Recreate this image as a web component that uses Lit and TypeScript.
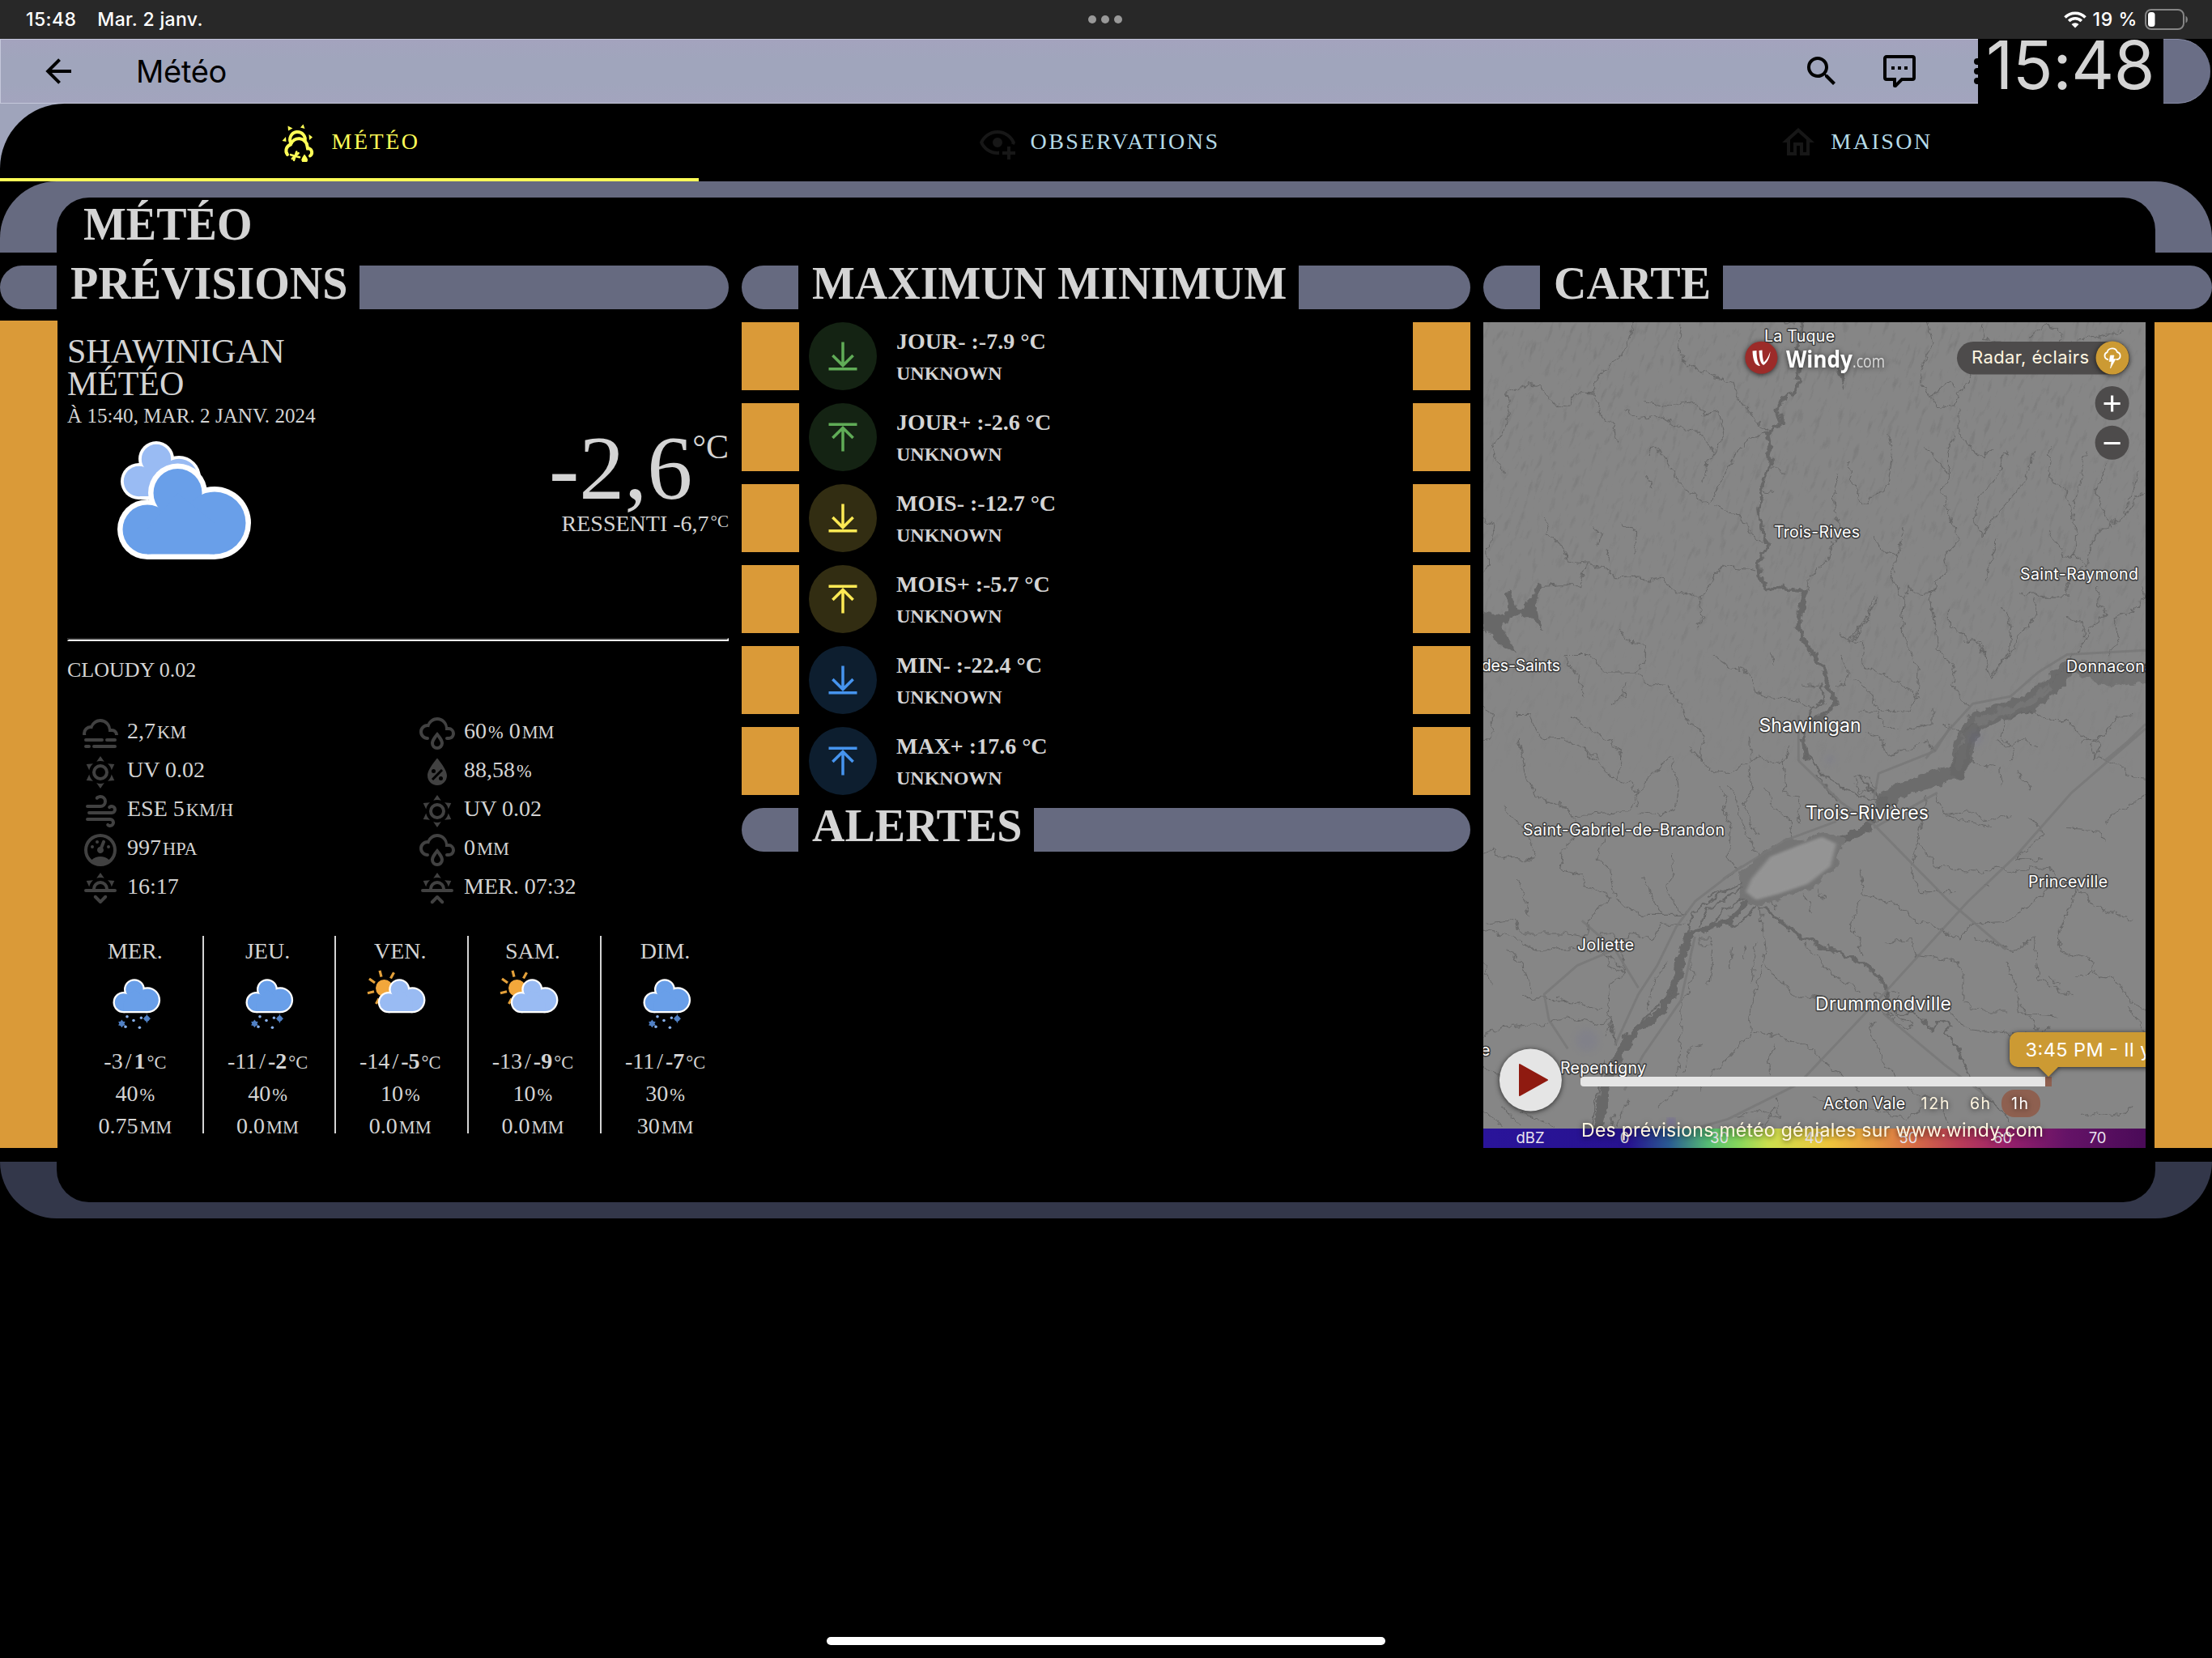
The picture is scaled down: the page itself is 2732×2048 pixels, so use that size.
import { LitElement, html, css, svg, nothing } from "lit";
import { customElement, property } from "lit/decorators.js";

const SUN_RAYS_TOP =
  "M12,2L14.39,5.42C13.65,5.15 12.84,5 12,5C11.16,5 10.35,5.15 9.61,5.42L12,2M3.34,7L7.5,6.65C6.9,7.16 6.36,7.78 5.94,8.5C5.5,9.24 5.25,10 5.11,10.79L3.34,7M20.65,7L18.88,10.79C18.74,10 18.47,9.23 18.05,8.5C17.63,7.78 17.1,7.15 16.5,6.64L20.65,7";
const HORIZON =
  "M3,12H7A5,5 0 0,1 12,7A5,5 0 0,1 17,12H21A1,1 0 0,1 22,13A1,1 0 0,1 21,14H3A1,1 0 0,1 2,13A1,1 0 0,1 3,12M15,12A3,3 0 0,0 12,9A3,3 0 0,0 9,12H15";

const ICONS: Record<string, string> = {
  back: "M20,11V13H8L13.5,18.5L12.08,19.92L4.16,12L12.08,4.08L13.5,5.5L8,11H20Z",
  search:
    "M9.5,3A6.5,6.5 0 0,1 16,9.5C16,11.11 15.41,12.59 14.44,13.73L14.71,14H15.5L20.5,19L19,20.5L14,15.5V14.71L13.73,14.44C12.59,15.41 11.11,16 9.5,16A6.5,6.5 0 0,1 3,9.5A6.5,6.5 0 0,1 9.5,3M9.5,5C7,5 5,7 5,9.5C5,12 7,14 9.5,14C12,14 14,12 14,9.5C14,7 12,5 9.5,5Z",
  comment:
    "M9,22A1,1 0 0,1 8,21V18H4A2,2 0 0,1 2,16V4C2,2.89 2.9,2 4,2H20A2,2 0 0,1 22,4V16A2,2 0 0,1 20,18H13.9L10.2,21.71C10,21.9 9.75,22 9.5,22V22H9M10,16V19.08L13.08,16H20V4H4V16H10M17,11H15V9H17V11M13,11H11V9H13V11M9,11H7V9H9V11Z",
  dots: "M12,16A2,2 0 0,1 14,18A2,2 0 0,1 12,20A2,2 0 0,1 10,18A2,2 0 0,1 12,16M12,10A2,2 0 0,1 14,12A2,2 0 0,1 12,14A2,2 0 0,1 10,12A2,2 0 0,1 12,10M12,4A2,2 0 0,1 14,6A2,2 0 0,1 12,8A2,2 0 0,1 10,6A2,2 0 0,1 12,4Z",
  eye: "M12,4.5C7,4.5 2.73,7.61 1,12C2.73,16.39 7,19.5 12,19.5C12.36,19.5 12.72,19.5 13.08,19.45C13.03,19.13 13,18.82 13,18.5C13,18.14 13.04,17.78 13.1,17.42C12.74,17.46 12.37,17.5 12,17.5C8.24,17.5 4.83,15.36 3.18,12C4.83,8.64 8.24,6.5 12,6.5C15.76,6.5 19.17,8.64 20.82,12C20.7,12.24 20.56,12.45 20.43,12.68C21.09,12.84 21.72,13.11 22.29,13.5C22.56,13 22.8,12.5 23,12C21.27,7.61 17,4.5 12,4.5M12,9A3,3 0 0,0 9,12A3,3 0 0,0 12,15A3,3 0 0,0 15,12A3,3 0 0,0 12,9M18,14.5V17.5H15V19.5H18V22.5H20V19.5H23V17.5H20V14.5H18Z",
  home: "M12,5.69L17,10.19V18H15V12H9V18H7V10.19L12,5.69M12,3L2,12H5V20H11V14H13V20H19V12H22L12,3Z",
  fog: "M3,15H13A1,1 0 0,1 14,16A1,1 0 0,1 13,17H3A1,1 0 0,1 2,16A1,1 0 0,1 3,15M16,15H21A1,1 0 0,1 22,16A1,1 0 0,1 21,17H16A1,1 0 0,1 15,16A1,1 0 0,1 16,15M1,12A5,5 0 0,1 6,7C7,4.65 9.3,3 12,3C15.43,3 18.24,5.66 18.5,9.03L19,9C21.19,9 22.97,10.76 23,13H21A2,2 0 0,0 19,11H17V10A5,5 0 0,0 12,5C9.5,5 7.45,6.82 7.06,9.19C6.73,9.07 6.37,9 6,9A3,3 0 0,0 3,12C3,12.35 3.06,12.69 3.17,13H1.1L1,12M3,19H5A1,1 0 0,1 6,20A1,1 0 0,1 5,21H3A1,1 0 0,1 2,20A1,1 0 0,1 3,19M8,19H21A1,1 0 0,1 22,20A1,1 0 0,1 21,21H8A1,1 0 0,1 7,20A1,1 0 0,1 8,19Z",
  sunny:
    "M12,7A5,5 0 0,1 17,12A5,5 0 0,1 12,17A5,5 0 0,1 7,12A5,5 0 0,1 12,7M12,9A3,3 0 0,0 9,12A3,3 0 0,0 12,15A3,3 0 0,0 15,12A3,3 0 0,0 12,9M3.36,17L5.12,13.23C5.26,14 5.53,14.78 5.95,15.5C6.37,16.24 6.91,16.86 7.5,17.37L3.36,17M20.64,17L16.5,17.36C17.09,16.85 17.62,16.22 18.04,15.5C18.46,14.77 18.73,14 18.87,13.21L20.64,17M12,22L9.59,18.56C10.33,18.83 11.14,19 12,19C12.82,19 13.63,18.83 14.37,18.56L12,22Z" +
    SUN_RAYS_TOP,
  windy:
    "M4,10A1,1 0 0,1 3,9A1,1 0 0,1 4,8H12A2,2 0 0,0 14,6A2,2 0 0,0 12,4C11.45,4 10.95,4.22 10.59,4.59C10.2,5 9.56,5 9.17,4.59C8.78,4.2 8.78,3.56 9.17,3.17C9.9,2.45 10.9,2 12,2A4,4 0 0,1 16,6A4,4 0 0,1 12,10H4M19,12A1,1 0 0,0 20,11A1,1 0 0,0 19,10C18.72,10 18.47,10.11 18.29,10.29C17.9,10.68 17.27,10.68 16.88,10.29C16.5,9.9 16.5,9.27 16.88,8.88C17.42,8.34 18.17,8 19,8A3,3 0 0,1 22,11A3,3 0 0,1 19,14H5A1,1 0 0,1 4,13A1,1 0 0,1 5,12H19M18,18H4A1,1 0 0,1 3,17A1,1 0 0,1 4,16H18A3,3 0 0,1 21,19A3,3 0 0,1 18,22C17.17,22 16.42,21.66 15.88,21.12C15.5,20.73 15.5,20.1 15.88,19.71C16.27,19.32 16.9,19.32 17.29,19.71C17.47,19.89 17.72,20 18,20A1,1 0 0,0 19,19A1,1 0 0,0 18,18Z",
  gauge:
    "M12,2A10,10 0 0,0 2,12A10,10 0 0,0 12,22A10,10 0 0,0 22,12A10,10 0 0,0 12,2M12,4A8,8 0 0,1 20,12C20,14.4 19,16.5 17.3,18C15.9,16.7 14,16 12,16C10,16 8.2,16.7 6.7,18C5,16.5 4,14.4 4,12A8,8 0 0,1 12,4M14,5.89C13.62,5.9 13.26,6.15 13.1,6.54L11.81,9.77L11.71,10C11,10.13 10.41,10.6 10.14,11.26C9.73,12.29 10.23,13.45 11.26,13.86C12.29,14.27 13.45,13.77 13.86,12.74C14.12,12.08 14,11.32 13.57,10.76L13.67,10.5L14.96,7.29L14.97,7.26C15.17,6.75 14.92,6.17 14.41,5.96C14.28,5.91 14.15,5.89 14,5.89M10,6A1,1 0 0,0 9,7A1,1 0 0,0 10,8A1,1 0 0,0 11,7A1,1 0 0,0 10,6M7,9A1,1 0 0,0 6,10A1,1 0 0,0 7,11A1,1 0 0,0 8,10A1,1 0 0,0 7,9M17,9A1,1 0 0,0 16,10A1,1 0 0,0 17,11A1,1 0 0,0 18,10A1,1 0 0,0 17,9Z",
  sunset:
    HORIZON + SUN_RAYS_TOP +
    "M12.71,20.71L15.82,17.6C16.21,17.21 16.21,16.57 15.82,16.18C15.43,15.79 14.8,15.79 14.41,16.18L12,18.59L9.59,16.18C9.2,15.79 8.57,15.79 8.18,16.18C7.79,16.57 7.79,17.21 8.18,17.6L11.29,20.71C11.5,20.9 11.74,21 12,21C12.26,21 12.5,20.9 12.71,20.71Z",
  sunrise:
    HORIZON + SUN_RAYS_TOP +
    "M12.71,16.3L15.82,19.41C16.21,19.8 16.21,20.43 15.82,20.82C15.43,21.21 14.8,21.21 14.41,20.82L12,18.41L9.59,20.82C9.2,21.21 8.57,21.21 8.18,20.82C7.79,20.43 7.79,19.8 8.18,19.41L11.29,16.3C11.5,16.1 11.74,16 12,16C12.26,16 12.5,16.1 12.71,16.3Z",
  rainy:
    "M6,14.03A1,1 0 0,1 7,15.03C7,15.58 6.55,16.03 6,16.03C3.24,16.03 1,13.79 1,11.03C1,8.27 3.24,6.03 6,6.03C7,3.68 9.3,2.03 12,2.03C15.43,2.03 18.24,4.69 18.5,8.06L19,8.03A4,4 0 0,1 23,12.03C23,14.23 21.21,16.03 19,16.03H18C17.45,16.03 17,15.58 17,15.03C17,14.47 17.45,14.03 18,14.03H19A2,2 0 0,0 21,12.03A2,2 0 0,0 19,10.03H17V9.03C17,6.27 14.76,4.03 12,4.03C9.5,4.03 7.45,5.84 7.06,8.21C6.73,8.09 6.37,8.03 6,8.03A3,3 0 0,0 3,11.03A3,3 0 0,0 6,14.03M12,14.15C12.18,14.39 12.37,14.66 12.56,14.94C13,15.56 14,17.03 14,18C14,19.11 13.1,20 12,20A2,2 0 0,1 10,18C10,17.03 11,15.56 11.44,14.94C11.63,14.66 11.82,14.4 12,14.15M12,11.03L11.5,11.59C11.5,11.59 10.65,12.55 9.79,13.81C8.93,15.06 8,16.56 8,18A4,4 0 0,0 12,22A4,4 0 0,0 16,18C16,16.56 15.07,15.06 14.21,13.81C13.35,12.55 12.5,11.59 12.5,11.59Z",
  humidity:
    "M12,3.25C12,3.25 6,10 6,14C6,17.32 8.69,20 12,20A6,6 0 0,0 18,14C18,10 12,3.25 12,3.25M14.47,9.97L15.53,11.03L9.53,17.03L8.47,15.97M9.75,10A1.25,1.25 0 0,1 11,11.25A1.25,1.25 0 0,1 9.75,12.5A1.25,1.25 0 0,1 8.5,11.25A1.25,1.25 0 0,1 9.75,10M14.25,14.5A1.25,1.25 0 0,1 15.5,15.75A1.25,1.25 0 0,1 14.25,17A1.25,1.25 0 0,1 13,15.75A1.25,1.25 0 0,1 14.25,14.5Z",
  down: "M19.92,12.08L12,20L4.08,12.08L5.5,10.67L11,16.17V2H13V16.17L18.5,10.66L19.92,12.08M12,20H2V22H22V20H12Z",
  up: "M4.08,11.92L12,4L19.92,11.92L18.5,13.33L13,7.83V22H11V7.83L5.5,13.33L4.08,11.92M12,4H22V2H2V4H12Z",
};

const icon = (name: string, size = 48) => html`<svg class="icon" width=${size} height=${size} viewBox="0 0 24 24">
  <path fill="currentColor" fill-rule=${name === "humidity" ? "evenodd" : "nonzero"} d=${ICONS[name]}></path>
</svg>`;

/* Cloud outlined in white: three lobes over a flat base. */
const cloud = (fill: string) => svg`
  <g fill="#fff">
    <circle cx="181" cy="655" r="37"/><circle cx="218.5" cy="610" r="36.5"/><circle cx="264" cy="647" r="45"/>
    <path d="M181 655L218 610L264 647V692H181Z"/>
  </g>
  <g fill=${fill}>
    <circle cx="181" cy="655" r="30.5"/><circle cx="218.5" cy="610" r="30"/><circle cx="264" cy="647" r="38.5"/>
    <path d="M181 655L218 610L264 647V685.5H181Z"/>
  </g>`;

const currentIcon = html`<svg class="now-icon" width="175" height="160" viewBox="140 540 175 160">
  <g fill="#fff">
    <circle cx="170.5" cy="595.5" r="22.5"/><circle cx="192" cy="568" r="22"/><circle cx="220" cy="591" r="27"/>
    <path d="M170 596L192 568L220 591V618H170Z"/>
  </g>
  <g fill="#99bbf3">
    <circle cx="170.5" cy="595.5" r="18.7"/><circle cx="192" cy="568" r="18.2"/><circle cx="220" cy="591" r="23.2"/>
    <path d="M170 596L192 568L220 591V614H170Z"/>
  </g>
  ${cloud("#699fe9")}
</svg>`;

const snowIcon = html`<svg class="day-icon" width="112" height="92" viewBox="0 3 112 92">
  <g transform="translate(-22.6 -184.4) scale(.355)">${cloud("#699fe9")}</g>
  <g fill="#4f7fc4">
    <path d="M39.4 69.500l1.700 2.200 2.600 .3-1.200 2.300 1.200 2.300-2.600 .4-1.700 2.200-1.700-2.200-2.600-.4 1.200-2.300-1.200-2.300 2.600-.3z"/>
    <path d="M70.400 62.500l1.500 3.600 3.300 2.200-3.300 2-1.500 3.700-1.500-3.700-3.300-2 3.300-2.200z"/>
    <circle cx="70.400" cy="68.300" r="3.300"/>
  </g>
  <g fill="#86aee8">
    <circle cx="46" cy="65.700" r="1.800"/><circle cx="54" cy="70.500" r="1.800"/><circle cx="44" cy="78.200" r="1.800"/>
    <circle cx="63.400" cy="67.300" r="1.700"/><circle cx="61.400" cy="79.300" r="1.800"/>
  </g>
</svg>`;

const sunCloudIcon = html`<svg class="day-icon" width="112" height="92" viewBox="0 3 112 92">
  <g stroke="#e3a03a" stroke-width="3.200" stroke-linecap="butt">
    <path d="M31 8.800L33 16.700M48.500 11.200L44.500 18.500M18 19L25 24M16 36.800L24 34.800M26.500 50L30 43.500"/>
  </g>
  <circle cx="36.500" cy="30.500" r="10.500" fill="#f2a73b"/>
  <g transform="translate(-22.300 -184.400) scale(.355)">${cloud("#99bbf3")}</g>
</svg>`;

const tabWeatherIcon = html`<svg class="icon" width="48" height="48" viewBox="346 152 48 48">
  <g fill="currentColor">
    <path d="M355.500 155.500L361.500 158.500L356 161.500ZM374.500 153.500L376.500 159L371 157.500ZM381.500 166L386 169.500L382 173ZM353 169L353.500 175L348.500 174Z"/>
    <path d="M376 190.500Q380 195.500 380 197.300A3.800 3.800 0 0 1 372.400 197.300Q372.400 195.500 376 190.500Z"/>
  </g>
  <g fill="none" stroke="currentColor" stroke-width="4" stroke-linecap="round">
    <path d="M359.500 177A9.300 9.300 0 1 1 376.500 174.500"/>
    <path d="M355 191A8 8 0 0 1 359 178.500A10.500 10.500 0 0 1 379.500 181L380 183.500H382A5.200 5.200 0 0 1 383 192.500"/>
    <path stroke-width="2.600" d="M359 191.200L370 194.200M363 197.800L366.200 187.600M360.800 196L368.600 189.200"/>
  </g>
</svg>`;

@customElement("section-bar")
class SectionBar extends LitElement {
  @property() label = "";
  static styles = css`
    :host { display: flex; height: 54px; }
    .cap { width: 70px; background: #666a80; border-radius: 27px 0 0 27px; }
    .rest { flex: 1; background: #666a80; border-radius: 0 27px 27px 0; }
    .title { padding: 1px 15px 0 17px; font: bold 56px/42px "Liberation Serif", serif; color: #d4d4d4; white-space: nowrap; }
  `;
  render() {
    return html`<div class="cap"></div><div class="title">${this.label}</div><div class="rest"></div>`;
  }
}

interface Place { name: string; x: number; y: number; w?: number; size: number; }

const PLACES: Place[] = [
  { name: "La Tuque", x: 2179, y: 422, w: 87, size: 19.500 },
  { name: "Trois-Rives", x: 2191, y: 664, w: 106, size: 19.500 },
  { name: "Saint-Raymond", x: 2495, y: 716, w: 146, size: 19.500 },
  { name: "-des-Saints", x: 1821, y: 828.500, w: 106, size: 19.500 },
  { name: "Donnacona", x: 2552, y: 830, w: 108, size: 19.500 },
  { name: "Shawinigan", x: 2172.500, y: 903.500, w: 126, size: 23 },
  { name: "Trois-Rivières", x: 2230, y: 1012, w: 152, size: 23 },
  { name: "Saint-Gabriel-de-Brandon", x: 1881, y: 1032, w: 249, size: 19.500 },
  { name: "Princeville", x: 2505, y: 1096, w: 98, size: 19.500 },
  { name: "Joliette", x: 1948, y: 1174, w: 70, size: 19.500 },
  { name: "Drummondville", x: 2242, y: 1248, w: 168, size: 23 },
  { name: "Repentigny", x: 1927, y: 1326, w: 106, size: 19.500 },
  { name: "e", x: 1829, y: 1304, size: 19.500 },
  { name: "Acton Vale", x: 2252, y: 1370, w: 101, size: 19.500 },
];

const LEGEND: [string, number][] = [
  ["dBZ", 1890], ["0", 2006.700], ["30", 2123.600], ["40", 2240.500], ["50", 2357], ["60", 2473.700], ["70", 2590.600],
];

/* Upper and lower halves of the basemap are drawn in their own tile coordinates. */
const STREAMS_TOP = `
M340 50L325 120L300 190L265 230L258 290L270 370L295 400L308 470
M258 300L215 295L200 345L170 335L140 270L115 265L70 300L78 370L60 440L40 480L50 530L65 575
M442 60L436 110L440 175L480 220L550 260L560 310L590 370L625 430
M360 320L400 345L460 325L490 370L520 360L530 450L515 495L495 540L490 600
M322 355L350 385L400 378L430 410L480 430L505 490L512 500
M625 435L590 445L560 500L530 580L515 640L500 680L460 640L430 590L400 500L380 478L375 510
M515 685L550 710L580 750L595 790L615 820
M150 720L160 780L185 820L200 880L240 885L280 900L300 935L350 930L370 950L400 930L420 980L460 990L480 1010L500 960L530 890L560 900L600 910
M480 1010L485 1070L475 1110 M240 890L225 960L180 960L145 965
M365 580L380 625 M255 755L270 790L265 825 M310 745L345 775L340 850 M280 840L292 880
M965 50L975 120L955 200L945 250L970 300L990 290L1000 260L1030 270
M970 300L985 340L1020 345L1030 300L1060 230 M1080 60L1085 110L1120 120L1165 170
M1030 345L1030 430L1060 490L1080 520L1100 490 M1180 100L1220 60L1250 90L1240 130L1300 110L1380 80
M955 480L985 530L1010 580L995 640L1010 700L1020 770L1030 810L1000 860L1005 910L980 960L970 1010L980 1100L985 1180L1020 1240L1015 1300L1050 1380
M775 575L765 640L770 720L775 780L755 860L715 930L705 975
M795 530L800 590L815 630L825 680L850 650L880 610L890 500L880 440
M915 755L900 860L888 930L900 980L915 1015L910 1120L930 1200L945 1240L940 1350L920 1400L860 1390L840 1330L810 1285
M850 790L865 835L900 860 M860 1005L830 1080L800 1150L770 1130 M850 1000L835 1080L800 1160
M800 1155L830 1160L825 1230L860 1265L900 1290L945 1350
M1020 430L1010 500L1010 580 M1130 500L1110 590L1080 640L1060 720L1080 790L1120 700L1170 600L1190 500
M1225 480L1220 580L1255 630L1270 700L1280 760L1275 850L1300 900L1310 820L1340 760L1380 720L1420 640
M1300 490L1290 590L1275 690 M1345 540L1320 640L1355 760 M1410 560L1400 640L1380 710
M1220 770L1245 820L1255 870L1280 850 M1110 800L1100 870L1088 940
M915 1015L925 960L935 985L970 990L980 970 M1155 995L1190 985L1210 1000L1260 1000L1265 940L1300 890
M1190 1000L1200 1060L1170 1110L1150 1170L1100 1280L1080 1180L1030 1120L1010 1100L1010 1040
M1330 960L1320 1010L1345 1060L1310 1110L1300 1160L1255 1240L1210 1330 M1420 960L1425 1000L1400 1050L1360 1070L1370 1130L1350 1210
M1260 1070L1290 1090L1300 1140 M1125 1040L1145 1100L1140 1180L1120 1230L1100 1270 M1040 1150L1080 1165L1095 1260
M1000 1440L1040 1475 M975 1380L975 1440L920 1460 M20 1380L40 1410L40 1470L20 1500 M90 1410L120 1410L145 1495L190 1490L230 1520L270 1568
M210 1410L250 1460L290 1500L320 1568 M310 1115L330 1160L365 1165L365 1230L345 1260L275 1260L245 1200L190 1200
M345 1260L365 1300L410 1310L440 1370L455 1430L490 1470L480 1568 M190 1200L220 1280L235 1345 M290 1370L320 1340L325 1290
M505 1200L545 1245L570 1250L590 1290L600 1330L640 1350L690 1360L715 1390 M695 1300L760 1310 M630 1190L640 1235
M585 1480L590 1568 M830 1470L860 1480L880 1550L920 1530L960 1495L980 1530 M820 1395L860 1405L870 1445L900 1460
M1190 1395L1230 1430L1260 1430L1290 1480L1330 1510L1315 1568 M1185 1395L1130 1420L1120 1490L1150 1530L1140 1568 M1400 1410L1370 1415L1330 1490L1290 1500
M780 1200L795 1250L790 1300L770 1310 M680 50L640 50 M630 550L660 570 M610 635L640 640 M20 735L45 745L40 800L30 830L32 890L20 920`;

const STREAMS_BOTTOM = `
M95 30L110 150L140 220L190 240L210 270L330 262L350 190L400 110L420 90
M300 50L320 100L300 160L340 170L350 240 M230 60L300 160 M460 60L500 130L540 140L600 90L660 110L670 50
M420 100L435 200L430 250L400 270L350 265 M540 180L560 230L580 330L605 400 M580 120L590 190L575 240L600 330 M620 190L640 250L670 280L680 360
M520 180L540 210L530 250L545 310L540 400L560 440L540 470 M655 90L660 200L690 210L690 300
M65 245L100 300L130 380L125 415L50 400L40 370L20 390 M210 270L225 320L190 380L185 440L230 460L240 490L290 530L265 560L245 600L240 650L190 640L100 640L90 600L25 610
M420 390L425 440L410 490L430 560L450 580L350 580L300 530L290 440L260 400L290 310 M360 465L380 530L400 575
M95 470L120 590 M20 630L80 650L130 690L200 690L280 700L300 730L320 760L290 800L285 860L290 920L280 960
M280 690L340 640L380 660L400 610L450 610 M75 690L110 750L125 820 M20 730L35 800 M100 840L190 845L270 880
M460 690L465 790L440 860L440 950L435 1070L430 1130L390 1180 M510 690L500 800 M550 680L545 750 M575 680L570 720 M600 670L590 790 M610 560L620 700L590 860L585 960L530 1040L480 1130
M410 730L380 800L370 880 M490 985L460 1000L450 1070 M610 500L640 560 M700 520L720 570 M730 500L745 535
M820 530L800 620L820 660L825 710 M820 440L830 520L900 550L940 600L980 620L1030 660L1060 605L1140 600L1170 560L1190 540L1240 480L1280 500L1330 560L1400 600
M1110 120L1060 110L1050 90 M1115 120L1120 185 M1150 130L1185 190 M980 200L1000 270L1100 310 M960 210L950 300L930 440L945 510L1020 510 M1000 270L1060 260L1090 290L1140 270
M945 360L980 430L1080 450L1110 430L1150 450L1190 430L1240 450 M1150 405L1210 410 M1280 500L1260 580L1240 640L1250 700L1310 720L1320 770L1360 780L1400 860L1427 880
M1100 500L1090 480 M880 670L930 655L940 710L1030 730L1040 760L1040 860L1080 880L1130 880 M1130 730L1150 800L1160 890L1240 898
M1060 650L1150 695L1190 650L1200 780L1250 820L1275 840 M1220 770L1240 800 M1320 770L1280 770 M1200 60L1160 30L1130 60L1110 40
M1320 90L1310 50L1350 0 M1320 90L1370 110L1390 150L1427 155 M1260 310L1330 320L1340 350 M1150 410L1180 370L1210 330L1180 280 M1427 210L1380 250L1340 290
M620 740L650 790L690 840L740 840 M700 670L760 770L820 820 M840 940L880 1060L930 1130L990 1170L1010 1240 M850 910L840 940
M590 945L650 960L680 980L710 990L750 1050L820 1130 M640 990L625 1040L630 1080 M20 960L60 930L140 925L200 905L270 925L290 900
M1010 880L1050 940L1200 960L1230 930 M1160 860L1200 940 M1390 870L1427 950 M720 1150L780 1180L850 1190L920 1220L950 1190
M1290 1210L1320 1200L1370 1210L1400 1180 M20 1190L60 1240 M60 1180L100 1240 M300 1200L290 1245 M560 1210L600 1190L650 1220L640 1150
M100 1200L170 1240 M20 1060L60 1090 M330 1160L300 1245 M610 1245L640 1190`;

@customElement("radar-map")
class RadarMap extends LitElement {
  static styles = css`
    :host { display: block; width: 818px; height: 1020px; overflow: hidden; }
    .map { display: block; font-family: Inter, "Noto Sans", sans-serif; }
    .thin { fill: none; stroke: #5e5e5e; stroke-width: 1.1; opacity: .75; vector-effect: non-scaling-stroke; stroke-linejoin: round; }
    .road { fill: none; stroke: #787878; stroke-width: 3; vector-effect: non-scaling-stroke; stroke-linejoin: round; }
    .river { fill: none; stroke: #676767; vector-effect: non-scaling-stroke; stroke-linejoin: round; stroke-linecap: round; }
    .r3 { stroke-width: 2.2; } .r5 { stroke-width: 4; } .r7 { stroke-width: 6; } .r9 { stroke-width: 10; } .r18 { stroke-width: 19; } .r20 { stroke-width: 21; }
    .bay { fill: #686868; }
    .lake { fill: #747474; }
    .core { fill: none; stroke: #7c7c7c; stroke-width: 8; vector-effect: non-scaling-stroke; stroke-linejoin: round; }
    .place { fill: #fff; stroke: #303030; stroke-width: 3; paint-order: stroke; stroke-linejoin: round; stroke-opacity: .85; }
    .chrome { fill: #fff6e0; }
    .shadow { filter: drop-shadow(0 1px 3px rgba(0, 0, 0, .7)); }
  `;
  render() {
    return html`<svg class="map" width="818" height="1020" viewBox="1832 398 818 1020">
      <defs>
        <filter id="rough" x="0" y="0" width="1" height="1" filterUnits="objectBoundingBox">
          <feTurbulence type="fractalNoise" baseFrequency=".09" numOctaves="3" seed="4" result="n"></feTurbulence>
          <feDisplacementMap in="SourceGraphic" in2="n" scale="12" xChannelSelector="R" yChannelSelector="G"></feDisplacementMap>
        </filter>
        <filter id="relief" x="0" y="0" width="1" height="1" color-interpolation-filters="sRGB">
          <feTurbulence type="fractalNoise" baseFrequency=".16 .05" numOctaves="3" seed="9"></feTurbulence>
          <feColorMatrix values="0 0 0 0 .4  0 0 0 0 .4  0 0 0 0 .4  4 0 0 0 -2.3"></feColorMatrix>
        </filter>
        <filter id="soft"><feGaussianBlur stdDeviation="4"></feGaussianBlur></filter>
        <linearGradient id="dbz">
          <stop offset="0" stop-color="#2a149a"></stop><stop offset=".22" stop-color="#27128f"></stop>
          <stop offset=".28" stop-color="#2a5a92"></stop><stop offset=".34" stop-color="#56bd74"></stop>
          <stop offset=".385" stop-color="#86d75c"></stop><stop offset=".43" stop-color="#cbdf4e"></stop>
          <stop offset=".52" stop-color="#efc63d"></stop><stop offset=".59" stop-color="#e79b40"></stop>
          <stop offset=".65" stop-color="#d66c46"></stop><stop offset=".72" stop-color="#b93c58"></stop>
          <stop offset=".79" stop-color="#97206b"></stop><stop offset=".88" stop-color="#651367"></stop>
          <stop offset="1" stop-color="#4a0a58"></stop>
        </linearGradient>
        <linearGradient id="fade" x1="0" y1="0" x2="0" y2="1">
          <stop offset="0" stop-color="#fff"></stop><stop offset=".5" stop-color="#bbb"></stop><stop offset=".8" stop-color="#000"></stop>
        </linearGradient>
        <mask id="north"><rect x="1832" y="398" width="818" height="700" fill="url(#fade)"></rect></mask>
      </defs>
      <rect x="1832" y="398" width="818" height="1020" fill="#868686"></rect>
      <g mask="url(#north)">
        <g transform="rotate(18 2240 700)" opacity=".3"><rect x="1650" y="250" width="1200" height="1000" filter="url(#relief)"></rect></g>
      </g>
      <g filter="url(#rough)">
        <rect x="1812" y="378" width="858" height="1060" fill="none"></rect>
        <g transform="translate(1820 380) scale(.5816 .3571)">
          <path class="thin" d=${STREAMS_TOP}></path>
          <path class="river r5" d="M700 50L688 110L692 200L686 290L662 300L645 350L655 400L622 435L632 500L626 560L612 620L604 700L612 760L624 830L605 880L608 930L622 970L655 968L705 980"></path>
          <path class="river r7" d="M705 980L695 1040L690 1110L712 1180L740 1240L752 1300L768 1360L755 1400L735 1420L712 1440"></path>
          <path class="river r5" d="M712 1440L700 1480L710 1568"></path>
          <path class="river r3" d="M740 1300L745 1360L715 1390L712 1430"></path>
          <path class="bay" d="M20 1050L60 1070L75 1040L65 990L80 975L88 1040L110 1045L115 1010L140 945L150 965L130 1010L138 1070L152 1118L125 1080L100 1060L70 1080L60 1110L95 1200L60 1170L20 1110ZM770 200L790 230L785 280Z"></path>
          <path class="bay" opacity=".65" d="M1265 1225L1290 1280L1350 1312L1410 1300L1440 1280V1225L1380 1240L1320 1240L1290 1220Z"></path>
          <path class="river r20" opacity=".8" d="M1260 1250L1225 1310L1180 1370L1120 1400L1070 1430L1040 1500L1030 1600"></path>
          <path class="core" opacity=".5" d="M1225 1310L1180 1370L1120 1400L1070 1430L1040 1500L1030 1600"></path>
        </g>
        <g transform="translate(1820 900) scale(.5816 .3954)">
          <path class="thin" d=${STREAMS_BOTTOM}></path>
          <path class="river r18" opacity=".8" d="M1060 10L1050 60L1030 130L980 155L910 190L865 230"></path>
          <path class="river r9" d="M870 225L835 310L780 350"></path>
          <path class="river r3" d="M700 0L702 70L740 140L790 190L820 210L860 230M730 150L770 220M820 150L860 220M610 555L650 600L700 660"></path>
          <path class="lake" d="M570 445L620 380L660 350L700 345L740 320L790 345L775 390L775 430L740 470L720 500L680 520L610 550L575 540L565 490Z"></path>
          <path class="river r5" d="M620 565L700 655L760 690L840 745L875 800L880 850"></path>
          <path class="river r3" d="M880 850L900 890L940 890L975 950L990 910L1015 930L1000 950L1030 1000L1050 1080L1080 1140L1140 1220"></path>
          <path class="river r7" d="M580 545L540 600L480 635L460 640"></path>
          <path class="river r3" d="M570 480L520 520L470 570L450 640M570 500L500 560L480 620M575 530L530 570L500 630M600 550L560 620L530 600M540 500L500 520"></path>
          <path class="river r9" d="M460 640L440 720L425 820L395 890L340 950L300 1040L280 1100L265 1260"></path>
          <path class="river r3" d="M425 820L380 880L320 970M300 990L290 930M275 1040L250 1260"></path>
          <path class="thin" d="M480 650L500 650L510 675L480 680ZM850 830L900 825L900 900L870 890ZM805 150L840 150L850 190L820 200ZM880 880L930 930L920 940L880 900ZM270 640L300 640L310 680L320 760L290 750L280 690Z"></path>
        </g>
      </g>
      <g opacity=".8" transform="translate(1820 900) scale(.5816 .3954)">
        <path class="road" d="M1427 0L1270 200L1150 400L1050 540L870 830L690 1110L540 1220L480 1245M690 100L780 230L850 300L1010 540L1130 690M1010 0L980 70L860 140L850 220M985 200L850 310M770 290L660 350L550 450L470 540L430 620L390 740L350 830L300 990M870 890L1000 1050L1100 1160M230 600L300 690L350 810M300 690L220 740L150 830L160 910L200 1000M470 650L440 850L360 1020L320 1130M530 470L570 430"></path>
      </g>
      <g opacity=".8" transform="translate(1820 380) scale(.5816 .3571)">
        <path class="road" d="M690 1410L690 1568M960 1560L1010 1460L1060 1370L1140 1345L1200 1260L1260 1200L1427 1185M1427 1440L1390 1500L1340 1568"></path>
      </g>
      <path fill="#949494" filter="url(#soft)" transform="translate(1820 900) scale(.5816 .3954)" d="M590 470L630 400L690 365L740 338L770 360L758 430L710 485L650 515L600 535L578 510Z"></path>
      <g fill="#6b6b9a" opacity=".16" filter="url(#soft)">
        <circle cx="1960" cy="1285" r="14"></circle><circle cx="2260" cy="938" r="6"></circle><circle cx="2440" cy="912" r="9"></circle>
      </g>
      <circle cx="2064" cy="1386" r="5" fill="#5a4aa8" opacity=".6" filter="url(#soft)"></circle>

      ${PLACES.map((p) => svg`<text class="place" x=${p.x} y=${p.y} font-size=${p.size} textLength=${p.w ?? nothing}>${p.name}</text>`)}

      <g class="shadow">
        <circle cx="2175.400" cy="441.800" r="20" fill="#9c2b29"></circle>
        <path d="M2164.500 433.500C2165 446 2168 452 2174 452C2170.500 447 2169.500 441 2169.500 433ZM2172.500 433C2173 444 2174.500 449 2178 451C2183 448 2186 441 2186.500 434C2184 441 2181.500 445 2178.500 447.500C2177 443 2176.500 438 2176.500 432.500Z" fill="#fff"></path>
        <text x="2206" y="453.500" font-family="Open Sans" font-size="29" font-weight="700" fill="#fff" textLength="82" lengthAdjust="spacingAndGlyphs">Windy</text>
        <text x="2288" y="453.500" font-family="Open Sans" font-size="21" fill="#dcdcdc" textLength="40" lengthAdjust="spacingAndGlyphs">.com</text>
      </g>
      <rect x="2417" y="422" width="213" height="40.500" rx="20.200" fill="#4d4b4b"></rect>
      <text class="chrome" x="2435" y="449" font-size="22" textLength="145">Radar, éclairs</text>
      <circle class="shadow" cx="2609" cy="442" r="20.500" fill="#cc9a33"></circle>
      <g fill="none" stroke="#fff" stroke-width="1.800" stroke-linejoin="round">
        <path d="M2604 444H2603A4.600 4.600 0 0 1 2602.500 435.200A6.500 6.500 0 0 1 2615 435A4.600 4.600 0 0 1 2615 444H2613.500"></path>
        <path fill="#fff" stroke-width=".6" d="M2606.500 439H2611L2610 443.500H2613L2606.500 455L2608 446.500H2605Z"></path>
      </g>
      <circle cx="2608.600" cy="498" r="21" fill="#4d4b4b"></circle>
      <circle cx="2608.600" cy="546.800" r="21" fill="#4d4b4b"></circle>
      <path stroke="#fff" stroke-width="3.200" d="M2598.500 498.500H2618.700M2608.600 488.500V508.500M2598.500 547.500H2618.700"></path>

      <g class="shadow"><circle cx="1890.400" cy="1334" r="38.500" fill="#e5e5e5"></circle></g>
      <path d="M1877 1315L1911 1334L1877 1353Z" fill="#8f1a10" stroke="#8f1a10" stroke-width="2" stroke-linejoin="round"></path>
      <path d="M1956 1330H2526V1342H1956A4 4 0 0 1 1952 1338V1334A4 4 0 0 1 1956 1330Z" fill="#e5e5e5"></path>
      <rect x="2526" y="1330" width="8" height="12" fill="#8e6050"></rect>
      <g class="shadow"><path d="M2492 1275H2700V1318H2542L2530 1330L2518 1318H2492A10 10 0 0 1 2482 1308V1285A10 10 0 0 1 2492 1275Z" fill="#cc9a33"></path></g>
      <text x="2501.500" y="1305" font-size="23.500" fill="#fff" textLength="256">3:45 PM - Il y a 18 min</text>
      <rect x="2472" y="1346" width="48" height="34" rx="16" fill="#8e6050"></rect>
      <g class="shadow" font-size="19.500">
        <text class="chrome" x="2372.500" y="1370" textLength="35">12h</text>
        <text class="chrome" x="2433" y="1370" textLength="25">6h</text>
        <text fill="#fff" x="2484" y="1370" textLength="21">1h</text>
      </g>
      <rect x="1832" y="1394" width="818" height="25" fill="url(#dbz)"></rect>
      <g font-size="18.500" fill="#e9e4ee" text-anchor="middle">
        ${LEGEND.map(([t, x]) => svg`<text x=${x} y="1411.700">${t}</text>`)}
      </g>
      <text class="shadow" x="1953" y="1404" font-size="23" fill="#fff6e0" textLength="571">Des prévisions météo géniales sur www.windy.com</text>
    </svg>`;
  }
}

interface Extreme { label: string; dir: "up" | "down"; tone: string; }
const EXTREMES: Extreme[] = [
  { label: "JOUR- :-7.9 °C", dir: "down", tone: "green" },
  { label: "JOUR+ :-2.6 °C", dir: "up", tone: "green" },
  { label: "MOIS- :-12.7 °C", dir: "down", tone: "yellow" },
  { label: "MOIS+ :-5.7 °C", dir: "up", tone: "yellow" },
  { label: "MIN- :-22.4 °C", dir: "down", tone: "blue" },
  { label: "MAX+ :17.6 °C", dir: "up", tone: "blue" },
];

const u = (t: string) => html`<span class="unit">${t}</span>`;
const DETAILS = [
  { icon: "fog", text: html`2,7${u("KM")}` },
  { icon: "rainy", text: html`60${u("%")} 0${u("MM")}` },
  { icon: "sunny", text: html`UV 0.02` },
  { icon: "humidity", text: html`88,58${u("%")}` },
  { icon: "windy", text: html`ESE 5${u("KM/H")}` },
  { icon: "sunny", text: html`UV 0.02` },
  { icon: "gauge", text: html`997${u("HPA")}` },
  { icon: "rainy", text: html`0${u("MM")}` },
  { icon: "sunset", text: html`16:17` },
  { icon: "sunrise", text: html`MER. 07:32` },
];

const DAYS = [
  { d: "MER.", i: snowIcon, lo: "-3", hi: "1", p: "40", mm: "0.75" },
  { d: "JEU.", i: snowIcon, lo: "-11", hi: "-2", p: "40", mm: "0.0" },
  { d: "VEN.", i: sunCloudIcon, lo: "-14", hi: "-5", p: "10", mm: "0.0" },
  { d: "SAM.", i: sunCloudIcon, lo: "-13", hi: "-9", p: "10", mm: "0.0" },
  { d: "DIM.", i: snowIcon, lo: "-11", hi: "-7", p: "30", mm: "30" },
];

@customElement("app-root")
class AppRoot extends LitElement {
  static styles = css`
    :host { display: block; }
    * { box-sizing: border-box; }
    .screen { width: 2732px; height: 2048px; background: #000; color: #d4d4d4; overflow: hidden; display: flex; flex-direction: column; font-family: "Liberation Serif", serif; }
    .icon { display: block; flex: none; }
    .status { height: 48px; flex: none; background: #282828; color: #fff; display: grid; grid-template-columns: 1fr auto 1fr; align-items: center; padding: 0 29px 0 32px; font: 500 23px/46px Inter, sans-serif; }
    .status-left { display: flex; gap: 26px; white-space: nowrap; }
    .clock-small { letter-spacing: .4px; }
    .status-date { letter-spacing: .35px; }
    .multitask { display: flex; gap: 6px; margin: 0 5px 0 0; }
    .multitask i { width: 10px; height: 10px; border-radius: 5px; background: #999; }
    .status-right { display: flex; justify-content: flex-end; align-items: center; }
    .wifi { margin-right: 8px; }
    .percent { margin-right: 9px; letter-spacing: .6px; }
    .header { height: 80px; flex: none; display: flex; }
    .toolbar { width: 2443px; flex: none; display: flex; align-items: center; overflow: hidden; color: #000; padding-left: 47px; border: 1px solid #c4c7da; border-right: 0; background: linear-gradient(#a4a3be, #a0a5bc 30%, #a0a5bc 70%, #a3a4be); }
    .toolbar-title { margin-left: 72px; flex: 1; font: 38px/78px Inter, sans-serif; letter-spacing: -.3px; }
    .toolbar-search { margin-right: 48px; }
    .toolbar-comment { margin-right: 48px; }
    .toolbar-menu { width: 25px; flex: none; }
    .clock { width: 229px; flex: none; padding-left: 10px; font: 82px/66px Inter, sans-serif; letter-spacing: -.5px; white-space: nowrap; }
    .header-cap { width: 58px; border: solid #878ba6; border-width: 1px 0; background: #6a6e86; border-radius: 0 40px 40px 0; }
    .tabs-wrap { height: 96px; flex: none; background: linear-gradient(90deg, #9fa4bb 200px, #000 200px); }
    .tabs { height: 96px; background: #000; border-radius: 80px 0 0 0; display: grid; grid-template-columns: 863px 988px 1fr; overflow: visible; font-size: 28px; letter-spacing: 2.5px; color: #b5dbe8; }
    .tab { display: flex; align-items: center; justify-content: center; gap: 16px; border-bottom: 4px solid transparent; padding-top: 4px; padding-left: 1px; }
    .tab .icon { color: #171717; }
    .tab-label { padding-bottom: 2px; }
    .tab.active { color: #ffff57; border-color: #ffff57; }
    .tab.active .icon { color: #ffff57; }
    .frame-top { height: 88px; flex: none; background: #666a80; border-radius: 70px 70px 0 0; padding: 20px 70px 0; }
    .frame-top-inner { height: 68px; background: #000; border-radius: 40px 40px 0 0; padding-left: 33px; font: bold 56px/67px "Liberation Serif", serif; }
    .columns { margin-top: 16px; flex: none; height: 1090px; display: grid; grid-template-columns: repeat(3, 900px); gap: 16px; }
    .card { margin-top: 14px; height: 1022px; display: flex; }
    .rail { width: 71px; flex: none; background: #da9a38; }
    .forecast { width: 829px; padding: 18px 0 0 12px; }
    .place { font-size: 42px; line-height: 40px; width: 300px; letter-spacing: -.1px; }
    .date { font-size: 25px; line-height: 39px; letter-spacing: .06px; }
    .now { height: 255px; display: flex; justify-content: space-between; }
    .now-icon { margin: 6px 0 0 58px; }
    .now-temp { display: flex; justify-content: flex-end; align-items: flex-start; height: 90px; }
    .deg { font-size: 112px; line-height: 90px; }
    .deg-unit { font-size: 42px; line-height: 39px; }
    .feels { font-size: 28px; line-height: 47px; text-align: right; }
    .feels-unit { font-size: 21px; line-height: 0; vertical-align: 5px; margin-left: 2px; }
    .rule { height: 0; border: 2px inset #fff; border-color: #808080 #fff #fff #808080; }
    .summary { font-size: 26px; line-height: 71px; }
    .details { margin-top: 19px; padding-left: 17px; display: grid; grid-template-columns: 416px 1fr; grid-auto-rows: 48px; font-size: 28px; }
    .detail { display: flex; align-items: center; gap: 9px; }
    .detail .icon { color: #414141; }
    .detail-text { padding-bottom: 6px; line-height: 32px; }
    .unit { font-size: 22.4px; margin-left: 2px; line-height: 0; }
    .days { margin: 34px 0 0 5px; display: grid; grid-template-columns: repeat(5, 163.7px); height: 244px; font-size: 28px; text-align: center; }
    .day { height: 244px; border-right: 2px solid #d4d4d4; padding-right: 4px; }
    .day:last-child { border-color: transparent; }
    .day-name { line-height: 37px; }
    .day-icon { display: block; margin: 0 auto 5.500px; }
    .day-line { line-height: 40px; height: 40px; white-space: nowrap; }
    .slash { margin: 0 3px; }
    .extremes { margin-top: 16px; margin-bottom: 16px; display: flex; flex-direction: column; gap: 16px; }
    .extreme { height: 84px; display: flex; }
    .disc { width: 84px; height: 84px; margin: 0 24px 0 12px; border-radius: 50%; display: grid; place-items: center; }
    .green { background: #142313; color: #60ac57; }
    .yellow { background: #322d12; color: #fde954; }
    .blue { background: #0d1e2f; color: #4694ee; }
    .extreme-text { flex: 1; font-weight: bold; padding-top: 4px; }
    .extreme-name { font-size: 28px; line-height: 39px; }
    .extreme-state { font-size: 24px; line-height: 40px; }
    .map-card { margin-top: 16px; display: flex; justify-content: space-between; height: 1020px; }
    .frame-bottom { height: 70px; margin-top: 17px; flex: none; background: #33374a; border-radius: 0 0 70px 70px; padding: 0 70px 20px; }
    .frame-bottom-inner { height: 50px; background: #000; border-radius: 0 0 40px 40px; }
    .home-indicator { width: 690px; height: 10px; border-radius: 5px; background: #fff; margin: auto auto 16px; flex: none; }
  `;

  render() {
    return html`<div class="screen">
      <div class="status">
        <div class="status-left"><span class="clock-small">15:48</span><span class="status-date">Mar. 2 janv.</span></div>
        <div class="multitask"><i></i><i></i><i></i></div>
        <div class="status-right">
          <svg class="wifi" width="28" height="22" viewBox="0 0 28 22">
            <g fill="none" stroke="#fff" stroke-width="3.600"><path d="M1.500 8.500A17.500 17.500 0 0 1 26.500 8.500M6.200 13A11 11 0 0 1 21.800 13"></path></g>
            <path fill="#fff" d="M14 21.500L9.500 17A6.400 6.400 0 0 1 18.500 17Z"></path>
          </svg>
          <span class="percent">19 %</span>
          <svg width="54" height="26" viewBox="0 0 54 26">
            <rect x="1" y="1" width="47" height="24" rx="7" fill="none" stroke="#858585" stroke-width="2"></rect>
            <rect x="4" y="4" width="8.500" height="18" rx="3.500" fill="#fff"></rect>
            <path d="M50.500 8.500Q53 10 53 13Q53 16 50.500 17.500Z" fill="#858585"></path>
          </svg>
        </div>
      </div>
      <div class="header">
        <div class="toolbar">
          ${icon("back")}
          <div class="toolbar-title">Météo</div>
          <div class="toolbar-search">${icon("search")}</div>
          <div class="toolbar-comment">${icon("comment")}</div>
          <div class="toolbar-menu">${icon("dots")}</div>
        </div>
        <div class="clock">15:48</div>
        <div class="header-cap"></div>
      </div>
      <div class="tabs-wrap">
        <div class="tabs">
          <div class="tab active">${tabWeatherIcon}<span class="tab-label">MÉTÉO</span></div>
          <div class="tab">${icon("eye")}<span class="tab-label">OBSERVATIONS</span></div>
          <div class="tab">${icon("home")}<span class="tab-label">MAISON</span></div>
        </div>
      </div>
      <div class="frame-top"><div class="frame-top-inner">MÉTÉO</div></div>
      <div class="columns">
        <div>
          <section-bar label="PRÉVISIONS"></section-bar>
          <div class="card">
            <div class="rail"></div>
            <div class="forecast">
              <div class="place">SHAWINIGAN MÉTÉO</div>
              <div class="date">À 15:40, MAR. 2 JANV. 2024</div>
              <div class="now">
                ${currentIcon}
                <div>
                  <div class="now-temp"><span class="deg">-2,6</span><span class="deg-unit">°C</span></div>
                  <div class="feels">RESSENTI -6,7<span class="feels-unit">°C</span></div>
                </div>
              </div>
              <div class="rule"></div>
              <div class="summary">CLOUDY 0.02</div>
              <div class="details">
                ${DETAILS.map((d) => html`<div class="detail">${icon(d.icon)}<span class="detail-text">${d.text}</span></div>`)}
              </div>
              <div class="days">
                ${DAYS.map((d) => html`<div class="day">
                  <div class="day-name">${d.d}</div>
                  ${d.i}
                  <div class="day-line">${d.lo}<span class="slash">/</span><b>${d.hi}</b>${u("°C")}</div>
                  <div class="day-line">${d.p}${u("%")}</div>
                  <div class="day-line">${d.mm}${u("MM")}</div>
                </div>`)}
              </div>
            </div>
          </div>
        </div>
        <div>
          <section-bar label="MAXIMUN MINIMUM"></section-bar>
          <div class="extremes">
            ${EXTREMES.map((e) => html`<div class="extreme">
              <div class="rail"></div>
              <div class="disc ${e.tone}">${icon(e.dir, 42)}</div>
              <div class="extreme-text"><div class="extreme-name">${e.label}</div><div class="extreme-state">UNKNOWN</div></div>
              <div class="rail"></div>
            </div>`)}
          </div>
          <section-bar label="ALERTES"></section-bar>
        </div>
        <div>
          <section-bar label="CARTE"></section-bar>
          <div class="map-card"><radar-map></radar-map><div class="rail"></div></div>
        </div>
      </div>
      <div class="frame-bottom"><div class="frame-bottom-inner"></div></div>
      <div class="home-indicator"></div>
    </div>`;
  }
}
